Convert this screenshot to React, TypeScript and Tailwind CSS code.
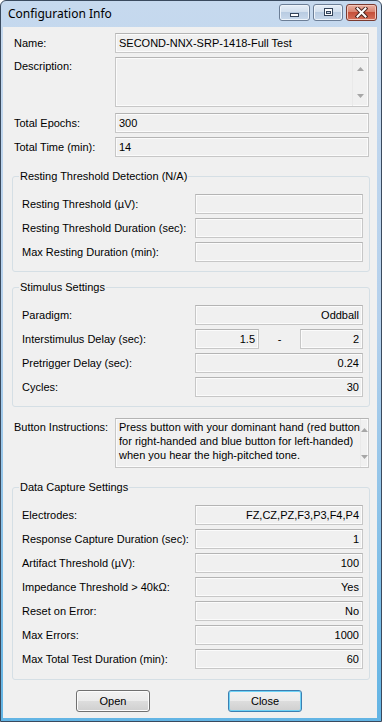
import React from "react";

const field =
  "flex h-[20px] items-center border border-[#c7c7c7] border-t-[#b4b4b4] bg-[#f0f0f0] px-[3px] shadow-[inset_0_0_0_1px_#fbfbfb]";

function Field({ value = "", right = false, className = "" }: { value?: string; right?: boolean; className?: string }) {
  return (
    <div className={`${field} ${right ? "justify-end" : ""} ${className}`}>
      <span className="whitespace-nowrap leading-none">{value}</span>
    </div>
  );
}

function ScrollArrows() {
  return (
    <div className="flex w-[16px] flex-col items-center justify-between border-l border-[#e9e9e9] pt-[9px] pb-[8px]">
      <svg width="7" height="4" viewBox="0 0 7 4">
        <path d="M3.5 0 L7 4 L0 4 Z" fill="#a6a6a6" />
      </svg>
      <svg width="7" height="4" viewBox="0 0 7 4">
        <path d="M0 0 L7 0 L3.5 4 Z" fill="#a6a6a6" />
      </svg>
    </div>
  );
}

function Memo({ children }: { children?: React.ReactNode }) {
  return (
    <div className="flex h-[50px] w-[254px] border border-[#c7c7c7] border-t-[#b4b4b4] bg-[#f0f0f0] shadow-[inset_0_0_0_1px_#fbfbfb]">
      <div className="flex-1 pt-[1px] pl-[3px] leading-[14px]">{children}</div>
      <ScrollArrows />
    </div>
  );
}

function TopRow({ label, value }: { label: string; value: string }) {
  return (
    <div className="flex items-center pl-[11px]">
      <span className="w-[101px]">{label}</span>
      <Field value={value} className="w-[254px]" />
    </div>
  );
}

function Row({ label, value = "" }: { label: string; value?: string }) {
  return (
    <div className="flex items-center">
      <span className="w-[173px] whitespace-nowrap">{label}</span>
      <Field value={value} right className="w-[168px]" />
    </div>
  );
}

function Group({ title, className = "", children }: { title: string; className?: string; children: React.ReactNode }) {
  return (
    <fieldset className={`ml-[9px] w-[358px] rounded-[3px] border border-[#d5dfe5] pb-[9px] ${className}`}>
      <legend className="ml-[6px] px-[1px] leading-[14px]">{title}</legend>
      <div className="flex flex-col gap-[4px] pt-[11px] pl-[9px]">{children}</div>
    </fieldset>
  );
}

function CaptionButtons() {
  const base = "flex h-[17px] items-center justify-center rounded-[3px] border";
  const blue =
    "border-[#6c7e96] bg-[linear-gradient(#e6eef8,#d3e0ee_45%,#b9cce2_50%,#c9d9eb)] shadow-[inset_0_0_0_1px_#eef4fa]";
  return (
    <div className="mt-[3px] flex gap-[3px] self-start">
      <div className={`${base} ${blue} w-[31px]`}>
        <svg width="11" height="11" viewBox="0 0 11 11">
          <rect x="1.5" y="6.5" width="8" height="3" fill="#fff" stroke="#34445a" />
        </svg>
      </div>
      <div className={`${base} ${blue} w-[30px]`}>
        <svg width="11" height="11" viewBox="0 0 11 11">
          <rect x="1.5" y="1.5" width="8" height="7" fill="#fff" stroke="#34445a" />
          <rect x="3.5" y="4.5" width="4" height="2" fill="#c4d4e6" stroke="#34445a" />
        </svg>
      </div>
      <div
        className={`${base} w-[31px] border-[#7a3a30] bg-[linear-gradient(#eab1a2,#d98470_45%,#c5503a_50%,#d5705a)] shadow-[inset_0_0_0_1px_#f2c5b9]`}
      >
        <svg width="13" height="11" viewBox="0 0 13 11">
          <path d="M2.5 1.5 L10.5 9.5 M10.5 1.5 L2.5 9.5" stroke="#4a2620" strokeWidth="4" strokeLinecap="square" />
          <path d="M2.5 1.5 L10.5 9.5 M10.5 1.5 L2.5 9.5" stroke="#fff" strokeWidth="2" strokeLinecap="square" />
        </svg>
      </div>
    </div>
  );
}

const btn =
  "h-[22px] w-[74px] rounded-[3px] border bg-[linear-gradient(#f2f2f2,#ebebeb_50%,#dddddd_50%,#cfcfcf)] text-[11px] text-black";

export default function App() {
  return (
    <div className="flex h-[722px] w-[382px] flex-col rounded-t-[6px] border border-[#3a4a5e] bg-[linear-gradient(#c6d9ee,#b4d0ec_45%,#62b4e4)] font-['Liberation_Sans',Arial,sans-serif] text-[11px] text-black">
      <div className="flex h-[26px] items-start justify-between pr-[4px] pl-[7px]">
        <span className="mt-[5px] font-['Noto_Sans',sans-serif] text-[12px] leading-[16px]">Configuration Info</span>
        <CaptionButtons />
      </div>

      <div className="mr-[4px] mb-[3px] ml-[2px] flex flex-1 flex-col bg-[#f0f0f0] pt-[6px]">
        <TopRow label="Name:" value="SECOND-NNX-SRP-1418-Full Test" />

        <div className="mt-[4px] flex items-start pl-[11px]">
          <span className="w-[101px] pt-[1px]">Description:</span>
          <Memo />
        </div>

        <div className="mt-[6px]">
          <TopRow label="Total Epochs:" value="300" />
        </div>
        <div className="mt-[4px]">
          <TopRow label="Total Time (min):" value="14" />
        </div>

        <Group title="Resting Threshold Detection (N/A)" className="mt-[12px]">
          <Row label="Resting Threshold (µV):" />
          <Row label="Resting Threshold Duration (sec):" />
          <Row label="Max Resting Duration (min):" />
        </Group>

        <Group title="Stimulus Settings" className="mt-[8px]">
          <Row label="Paradigm:" value="Oddball" />
          <div className="flex items-center">
            <span className="w-[173px]">Interstimulus Delay (sec):</span>
            <Field value="1.5" right className="w-[64px]" />
            <span className="w-[41px] text-center">-</span>
            <Field value="2" right className="w-[63px]" />
          </div>
          <Row label="Pretrigger Delay (sec):" value="0.24" />
          <Row label="Cycles:" value="30" />
        </Group>

        <div className="mt-[11px] flex items-start pl-[11px]">
          <span className="w-[101px] pt-[1px]">Button Instructions:</span>
          <Memo>
            <div className="whitespace-nowrap">Press button with your dominant hand (red button</div>
            <div className="whitespace-nowrap">for right-handed and blue button for left-handed)</div>
            <div className="whitespace-nowrap">when you hear the high-pitched tone.</div>
          </Memo>
        </div>

        <Group title="Data Capture Settings" className="mt-[12px] pb-[10px]">
          <Row label="Electrodes:" value="FZ,CZ,PZ,F3,P3,F4,P4" />
          <Row label="Response Capture Duration (sec):" value="1" />
          <Row label="Artifact Threshold (µV):" value="100" />
          <Row label="Impedance Threshold > 40kΩ:" value="Yes" />
          <Row label="Reset on Error:" value="No" />
          <Row label="Max Errors:" value="1000" />
          <Row label="Max Total Test Duration (min):" value="60" />
        </Group>

        <div className="mt-[10px] flex gap-[78px] pl-[73px]">
          <button className={`${btn} border-[#707070] shadow-[inset_0_0_0_1px_#fcfcfc]`}>Open</button>
          <button className={`${btn} border-[#3c7fb1] shadow-[inset_0_0_0_1px_#6fd3f7]`}>Close</button>
        </div>
      </div>
    </div>
  );
}
